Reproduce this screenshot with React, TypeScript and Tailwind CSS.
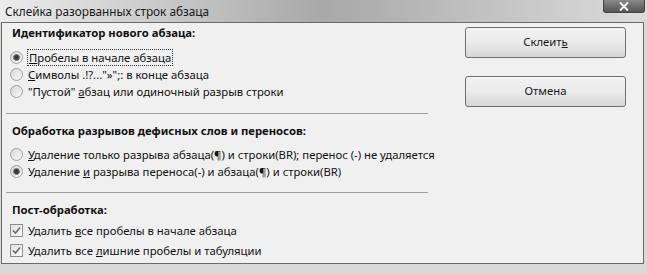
import React from 'react';

const font = { fontFamily: '"Noto Sans", "Open Sans", sans-serif' };

function Radio({ checked }: { checked?: boolean }) {
  return (
    <span className="w-[13px] h-[13px] rounded-full border border-[#a0a0a0] bg-gradient-to-br from-[#d8d8d8] to-[#f8f8f8] flex items-center justify-center shrink-0">
      {checked && <span className="w-[7px] h-[7px] rounded-full bg-[#3a3a3a] border border-[#7a7a7a]" />}
    </span>
  );
}

function Check() {
  return (
    <span className="w-[13px] h-[13px] border border-[#8e8e8e] bg-gradient-to-br from-[#e0e0e0] to-[#fafafa] flex items-center justify-center shrink-0">
      <svg width="9" height="9" viewBox="0 0 9 9">
        <path d="M1 4.5 L3.5 7 L8 1.5" stroke="#6a6a6a" strokeWidth="1.6" fill="none" />
      </svg>
    </span>
  );
}

function Row({ children, control }: { children: React.ReactNode; control: React.ReactNode }) {
  return (
    <div className="flex items-center gap-[5px] h-[17px] leading-[17px] pl-[6px]">
      {control}
      <span className="whitespace-nowrap">{children}</span>
    </div>
  );
}

function Btn({ children }: { children: React.ReactNode }) {
  return (
    <div className="w-[161px] h-[31px] rounded-[3px] border border-[#707070] bg-gradient-to-b from-[#f2f2f2] via-[#ebebeb] to-[#d6d6d6] flex items-center justify-center text-[#1a1a1a]">
      {children}
    </div>
  );
}

export default function App() {
  return (
    <div className="w-[647px] h-[274px] bg-[#d9d9d9] text-[11.3px] text-[#111] overflow-hidden" style={font}>
      <div className="h-[22px] flex items-start justify-between bg-gradient-to-r from-[#ececec] via-[#a8a8a8] to-[#dcdcdc]">
        <span className="pl-[5px] pt-[3px] text-[11.8px] text-[#1a1a1a]">Склейка разорванных строк абзаца</span>
        <div className="mr-[2px] w-[42px] h-[13px] rounded-b-[3px] border border-t-0 border-[#444] bg-gradient-to-b from-[#8a8a8a] to-[#555] flex items-center justify-center">
          <svg width="10" height="9" viewBox="0 0 10 9">
            <path d="M1 0.5 L9 8.5 M9 0.5 L1 8.5" stroke="#f2f2f2" strokeWidth="2" />
          </svg>
        </div>
      </div>
      <div className="ml-[1px] w-[643px] h-[242px] border border-[#6a6a6a] bg-[#f0f0f0] flex">
        <div className="w-[426px] pl-[2px] pt-[1px]">
          <div className="font-bold pl-[8px] h-[18px] leading-[18px]">Идентификатор нового абзаца:</div>
          <div className="mt-[7px]">
            <Row control={<Radio checked />}>
              <span className="outline outline-1 outline-dotted outline-[#333] px-px"><u>П</u>робелы в начале абзаца</span>
            </Row>
            <Row control={<Radio />}><u>С</u>имволы .!?..."»";: в конце абзаца</Row>
            <Row control={<Radio />}>"Пустой" <u>а</u>бзац или одиночный разрыв строки</Row>
          </div>
          <div className="mt-[13px] h-px bg-[#a0a0a0] ml-[2px]" />
          <div className="font-bold pl-[8px] mt-[8px] h-[18px] leading-[18px]">Обработка разрывов дефисных слов и переносов:</div>
          <div className="mt-[6px]">
            <Row control={<Radio />}><u>У</u>даление только разрыва абзаца(¶) и строки(BR); перенос (-) не удаляется</Row>
            <Row control={<Radio checked />}>Удаление <u>и</u> разрыва переноса(-) и абзаца(¶) и строки(BR)</Row>
          </div>
          <div className="mt-[12px] h-px bg-[#a0a0a0] ml-[2px]" />
          <div className="font-bold pl-[8px] mt-[8px] h-[18px] leading-[18px]">Пост-обработка:</div>
          <div className="mt-[3px] flex flex-col gap-[3px]">
            <Row control={<Check />}>Удалить <u>в</u>се пробелы в начале абзаца</Row>
            <Row control={<Check />}>Удалить все <u>л</u>ишние пробелы и табуляции</Row>
          </div>
        </div>
        <div className="ml-[37px] pt-[4px] flex flex-col gap-[18px]">
          <Btn>Склеит<u>ь</u></Btn>
          <Btn>Отмена</Btn>
        </div>
      </div>
    </div>
  );
}
